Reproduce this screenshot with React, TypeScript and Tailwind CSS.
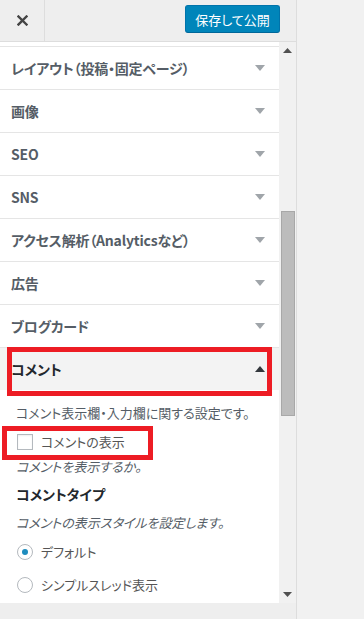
import React from 'react';

const jp = "font-['Noto_Sans_CJK_JP','Noto_Sans',sans-serif] [font-feature-settings:'palt']";

const sections = ['レイアウト（投稿・固定ページ）', '画像', 'SEO', 'SNS', 'アクセス解析（Analyticsなど）', '広告', 'ブログカード'];

function Arrow({ up = false }: { up?: boolean }) {
  return (
    <svg width="10" height="6" viewBox="0 0 10 6" className="shrink-0">
      {up ? (
        <polygon points="0,6 10,6 5,0" fill="#32373c" />
      ) : (
        <polygon points="0,0 10,0 5,6" fill="#a0a5aa" />
      )}
    </svg>
  );
}

function SectionRow({ title }: { title: string }) {
  return (
    <div className="h-[43px] border-t border-[#e5e5e5] flex items-center justify-between pl-[11px] pr-[14px]">
      <span className="text-[14px] font-semibold text-[#555d66] tracking-[-0.2px]">{title}</span>
      <Arrow />
    </div>
  );
}

export default function App() {
  return (
    <div className={`relative w-[364px] h-[619px] flex bg-[#f1f1f1] overflow-hidden ${jp}`}>
      {/* sidebar */}
      <div className="w-[297px] h-full flex flex-col bg-[#eee] border-r border-[#ddd] shrink-0">
        <div className="h-[42px] flex items-center border-b border-[#ddd] shrink-0">
          <div className="w-[45px] h-full border-r border-[#ddd] flex items-center justify-center">
            <svg width="11" height="11" viewBox="0 0 11 11">
              <path d="M1.5 1.5 L9.5 9.5 M9.5 1.5 L1.5 9.5" stroke="#444" strokeWidth="2.4" strokeLinecap="square" />
            </svg>
          </div>
          <button className="ml-auto mr-[16px] mb-[3px] w-[95px] h-[28px] rounded-[3px] bg-[#0085ba] border border-[#0073aa] border-b-[#006799] text-white text-[13px] leading-none flex items-center justify-center">
            保存して公開
          </button>
        </div>

        <div className="flex h-[561px] shrink-0">
          <div className="w-[279px] bg-white pt-[4px]">
            {sections.map((s) => (
              <SectionRow key={s} title={s} />
            ))}
            <div className="h-[43px] border-t border-[#e5e5e5] bg-[#f3f3f3] flex items-center justify-between pl-[11px] pr-[14px]">
              <span className="text-[14px] font-semibold text-[#23282d]">コメント</span>
              <Arrow up />
            </div>

            <div className="pl-[16px] text-[13px]">
              <p className="mt-[13px] leading-[20px] text-[#555d66]">コメント表示欄・入力欄に関する設定です。</p>
              <label className="mt-[10px] h-[18px] flex items-center gap-[8px] pl-[1px] text-[#555]">
                <span className="w-[16px] h-[16px] border border-[#b4b9be] bg-white shadow-[inset_0_1px_2px_rgba(0,0,0,0.07)]" />
                コメントの表示
              </label>
              <p className="mt-[7px] leading-[18px] italic text-[#555d66]">コメントを表示するか。</p>
              <p className="mt-[8px] leading-[20px] text-[14px] font-semibold text-[#23282d]">コメントタイプ</p>
              <p className="mt-[10px] leading-[18px] italic text-[#555d66]">コメントの表示スタイルを設定します。</p>
              <div className="mt-[11px] h-[18px] flex items-center gap-[8px] pl-[1px] text-[#555]">
                <span className="w-[16px] h-[16px] rounded-full border border-[#b4b9be] bg-white flex items-center justify-center">
                  <span className="w-[6px] h-[6px] rounded-full bg-[#1e8cbe]" />
                </span>
                デフォルト
              </div>
              <div className="mt-[15px] h-[18px] flex items-center gap-[8px] pl-[1px] text-[#555]">
                <span className="w-[16px] h-[16px] rounded-full border border-[#b4b9be] bg-white" />
                シンプルスレッド表示
              </div>
            </div>
          </div>

          {/* scrollbar */}
          <div className="w-[17px] bg-[#f1f1f1] flex flex-col">
            <div className="h-[17px] flex items-center justify-center">
              <svg width="9" height="5" viewBox="0 0 9 5"><polygon points="0,5 9,5 4.5,0" fill="#505050" /></svg>
            </div>
            <div className="flex-1 flex flex-col items-center">
              <div className="mt-[152px] w-[14px] h-[205px] bg-[#bcbcbc] border border-[#a8a8a8]" />
            </div>
            <div className="h-[17px] flex items-center justify-center">
              <svg width="9" height="5" viewBox="0 0 9 5"><polygon points="0,0 9,0 4.5,5" fill="#505050" /></svg>
            </div>
          </div>
        </div>
        <div className="flex-1 bg-[#eee]" />
      </div>

      {/* annotation boxes */}
      <div className="absolute left-[7px] top-[347px] w-[265px] h-[49px] border-[5px] border-[#ed1c24]" />
      <div className="absolute left-[2px] top-[426px] w-[151px] h-[34px] border-[5px] border-[#ed1c24]" />
    </div>
  );
}
